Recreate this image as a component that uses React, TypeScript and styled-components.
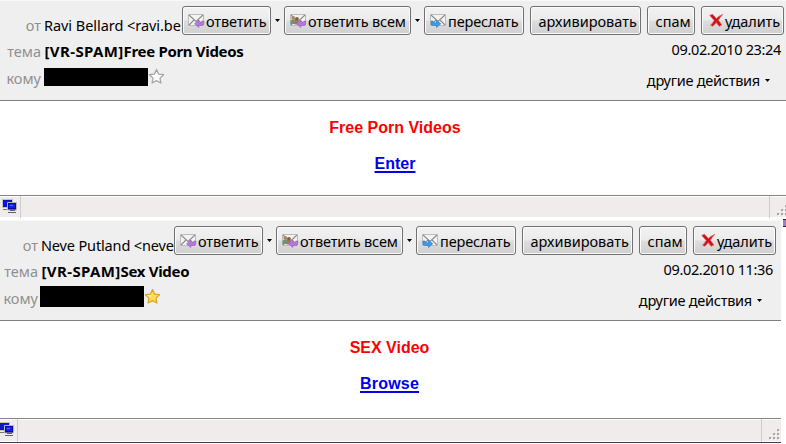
import React from 'react';
import styled, { createGlobalStyle } from 'styled-components';

const GlobalStyle = createGlobalStyle`
  body { margin: 0; background: #fff; }
`;

const Page = styled.main`
  position: relative;
  width: 786px;
  height: 444px;
  overflow: hidden;
  background: #fff;
  color: #000;
  font: 14.5px/20px "Noto Sans", "Open Sans", sans-serif;
`;

const Message = styled.article<{ $width: number }>`
  width: ${p => p.$width}px;
  height: 220px;
  overflow: hidden;
`;

const Header = styled.header`
  box-sizing: border-box;
  height: 101px;
  padding-top: 5px;
  background: #efefef;
  border-top: 1px solid #f8f8f8;
  border-bottom: 1px solid #808080;
`;

const HeaderRow = styled.div<{ $height: number; $edge: number }>`
  display: flex;
  align-items: flex-start;
  height: ${p => p.$height}px;
  padding-right: ${p => p.$edge}px;
  white-space: nowrap;
`;

const Label = styled.span<{ $width: number; $top: number }>`
  flex: none;
  width: ${p => p.$width}px;
  margin-top: ${p => p.$top}px;
  text-align: right;
  color: #8f8f8f;
`;

const Sender = styled.span<{ $spacing: number }>`
  flex: 1;
  min-width: 0;
  margin: 9px 0 0 3px;
  overflow: hidden;
  letter-spacing: ${p => p.$spacing}px;
`;

const Subject = styled.strong`
  flex: 1;
  margin: 3px 0 0 3.5px;
  font-size: 15px;
  letter-spacing: -0.33px;
`;

const SubjectTag = styled.span`
  letter-spacing: 0.38px;
`;

const Stamp = styled.time`
  margin-top: 1px;
  letter-spacing: -0.34px;
`;

const Recipient = styled.div<{ $tall?: boolean }>`
  flex: none;
  width: 104px;
  height: ${p => (p.$tall ? 21 : 18)}px;
  margin: ${p => (p.$tall ? 3 : 5)}px 0 0 ${p => (p.$tall ? 2 : 3)}px;
  background: #000;
`;

const StarIcon = styled.svg`
  flex: none;
  width: 17px;
  height: 17px;
  margin-top: 5px;
`;

const MoreActions = styled.span`
  display: flex;
  align-items: center;
  margin: 7px 0 0 auto;
  letter-spacing: -0.25px;
`;

const Caret = styled.svg`
  width: 5px;
  height: 3px;
  margin-left: 5px;
`;

const Toolbar = styled.div`
  flex: none;
  display: flex;
`;

const Action = styled.button<{ $width: number; $gap: number; $spacing?: number; $pad: number }>`
  box-sizing: border-box;
  display: flex;
  align-items: center;
  width: ${p => p.$width}px;
  height: 29px;
  margin: 0 0 0 ${p => p.$gap}px;
  padding: 0 0 0 ${p => p.$pad}px;
  border: 1px solid #707070;
  border-radius: 3px;
  background: linear-gradient(#f2f2f2 0, #ebebeb 48%, #dddddd 52%, #cfcfcf 100%);
  box-shadow: inset 0 0 0 1px #fbfbfb;
  color: #000;
  font: inherit;
  letter-spacing: ${p => p.$spacing ?? 0}px;
  white-space: nowrap;
`;

const DropArrow = styled.span`
  display: flex;
  width: 13px;
  padding-top: 13px;
  svg { margin-left: 4px; }
`;

const Glyph = styled.svg<{ $w: number }>`
  flex: none;
  width: ${p => p.$w}px;
  height: 18px;
  margin-right: 1px;
`;

const Body = styled.section<{ $second?: boolean }>`
  box-sizing: border-box;
  display: flex;
  flex-direction: column;
  align-items: center;
  height: 94px;
  padding: ${p => (p.$second ? '18px 2px 0 0' : '18px 0 0 4px')};
  font: bold 16px/18px "Liberation Sans", Arial, sans-serif;
`;

const Headline = styled.p`
  margin: 0 0 18px;
  color: #f00;
`;

const Link = styled.a<{ $spacing?: number }>`
  color: #00e;
  letter-spacing: ${p => p.$spacing ?? 0}px;
  text-decoration: underline;
  text-decoration-thickness: 2px;
  text-underline-offset: 2px;
  text-decoration-skip-ink: none;
`;

const StatusBar = styled.footer<{ $second?: boolean }>`
  box-sizing: border-box;
  display: flex;
  height: ${p => (p.$second ? 25 : 23)}px;
  margin-top: ${p => (p.$second ? 3 : 0)}px;
  background: #f0eceb;
  border-top: 1px solid #858585;
  border-bottom: ${p => (p.$second ? '1px solid #45365c' : '0')};
  box-shadow: inset 0 1px #fff, inset 0 -1px #fff;
`;

const StatusIcon = styled.div<{ $width: number; $shift: number }>`
  flex: none;
  width: ${p => p.$width}px;
  border-right: 1px solid #d0cccb;
  svg { display: block; margin: 2px 0 0 ${p => p.$shift}px; }
`;

const StatusText = styled.div`
  flex: 1;
  border-right: 1px solid #d0cccb;
`;

const Grip = styled.div<{ $width: number }>`
  display: flex;
  align-items: flex-end;
  width: ${p => p.$width}px;
  padding-bottom: 1px;
  overflow: hidden;
  svg { flex: none; margin-left: 7px; }
`;

const WindowSliver = styled.i`
  position: absolute;
  left: 783px;
  top: 219px;
  width: 3px;
  height: 6px;
  background: #9c80b8;
  border-top: 1px solid #2d2435;
  border-bottom: 1px solid #2d2435;
`;

function Arrow() {
  return <Caret viewBox="0 0 5 3"><path d="M0 0h5L2.5 3z" /></Caret>;
}

function Mail({ kind }: { kind: 'reply' | 'all' | 'forward' }) {
  return (
    <Glyph $w={17} viewBox="0 0 17 18">
      <path d="M.5 2.500h15v11H.5z" fill="#f3f3f3" stroke="#bcbcbc" />
      <path d="M1 3l7 6.500L15 3M1 13l5-5M15 13l-5-5" fill="none" stroke="#8b8b8b" strokeWidth="1.1" />
      {kind === 'all' && (
        <g>
          <circle cx="3.3" cy="6" r="2" fill="#ad8961" />
          <path d="M.5 12V9.500q0-2 3-2t3 2.500v2z" fill="#719274" />
          <circle cx="7" cy="7" r="1.900" fill="#805f48" />
          <path d="M4.500 12.500q0-4 2.500-4t3 4z" fill="#b36e68" />
        </g>
      )}
      {kind === 'forward' ? (
        <path d="M1 9v2.500q0 2 2.500 2h3v2l4.300-3.700-4.300-3.500v2.500H4Q3 10.800 3 9z" fill="#3b9bea" stroke="#2578c6" strokeWidth=".6" />
      ) : (
        <path d="M15.800 9v2.500q0 2-2.500 2h-2.500v2L6.500 11.800l4.300-3.500v2.500h2q1 0 1-1.800z" fill="#b677df" stroke="#965bc5" strokeWidth=".6" />
      )}
    </Glyph>
  );
}

function Cross() {
  return (
    <Glyph $w={15} viewBox="0 0 15 18">
      <path d="M.8 3.400L3.300 2.300Q6 4.500 7.300 6.600 10 3.600 13.800 2.400 10.800 5.300 9.300 8.300 11.400 10.700 12.800 13L10.300 14.300Q8.800 12.500 7.200 10.500 5.500 12.800 3.800 14.200L1.600 13.200Q4 10.800 5.200 8.400 3 6 .8 3.400z" fill="#ce1217" stroke="#e25c5c" strokeWidth=".8" />
    </Glyph>
  );
}

function Star({ on }: { on?: boolean }) {
  return (
    <StarIcon viewBox="0 0 17 17">
      <path
        d="M8.500 1.500l2.100 4.600 5 .6-3.600 3.400.9 4.900-4.400-2.400L4.100 15l.9-4.900-3.600-3.400 5-.6z"
        fill={on ? '#ffdc58' : '#fcfcfc'}
        stroke={on ? '#dba72b' : '#a5a5a5'}
        strokeWidth="1.300"
        strokeLinejoin="round"
      />
      {on && <path d="M8.500 3.500L7 7.200 3.200 7.500 6 9.800z" fill="#fff1a5" />}
    </StarIcon>
  );
}

function Computers() {
  return (
    <svg width="16" height="16" viewBox="0 0 16 16">
      <path d="M.5 1.500h10v8H.5z" fill="#1010c8" stroke="#c5c3ba" />
      <path d="M2 3h7v5H2z" fill="#0718e6" />
      <path d="M3 10h5v1H1v1h6v-2z" fill="#77756f" />
      <path d="M5.500 4.500h9v7.500h-9z" fill="#0808b0" stroke="#bab8b0" />
      <path d="M7 6h6v4H7z" fill="#1022e8" />
      <path d="M8 7h3v1H8z" fill="#5268ff" />
      <path d="M8 12h5v1H8zM6 14h8v1H6z" fill="#64625e" />
    </svg>
  );
}

function GripDots() {
  const dots = [[8, 0], [4, 4], [8, 4], [0, 8], [4, 8], [8, 8]];
  return (
    <svg width="12" height="12" viewBox="0 0 12 12">
      {dots.map(([x, y]) => (
        <g key={`${x}-${y}`}>
          <rect x={x + 1} y={y + 1} width="2" height="2" fill="#fff" />
          <rect x={x} y={y} width="2.200" height="2.200" fill="#aaa6a4" />
        </g>
      ))}
    </svg>
  );
}

interface MailProps {
  second?: boolean;
  sender: string;
  subject: string;
  date: string;
  headline: string;
  link: string;
}

function MailView({ second, sender, subject, date, headline, link }: MailProps) {
  const label = second ? 38 : 41;
  const edge = second ? 5 : 2;
  return (
    <Message $width={second ? 781 : 786}>
      <Header>
        <HeaderRow $height={32} $edge={edge}>
          <Label $width={label} $top={9}>от</Label>
          <Sender $spacing={second ? -0.15 : -0.05}>{sender}</Sender>
          <Toolbar>
            <Action $width={89} $gap={0} $pad={5} $spacing={-0.15}><Mail kind="reply" />ответить</Action>
            <DropArrow><Arrow /></DropArrow>
            <Action $width={127} $gap={0} $pad={5} $spacing={-0.15}><Mail kind="all" />ответить всем</Action>
            <DropArrow><Arrow /></DropArrow>
            <Action $width={100} $gap={0} $pad={5} $spacing={-0.15}><Mail kind="forward" />переслать</Action>
            <Action $width={111} $gap={6} $pad={7.5}>архивировать</Action>
            <Action $width={48} $gap={6} $pad={7.5}>спам</Action>
            <Action $width={83} $gap={6} $pad={7} $spacing={-0.1}><Cross />удалить</Action>
          </Toolbar>
        </HeaderRow>
        <HeaderRow $height={25} $edge={second ? 8 : 5}>
          <Label $width={label} $top={3}>тема</Label>
          <Subject><SubjectTag>[VR-SPAM]</SubjectTag>{subject}</Subject>
          <Stamp>{date}</Stamp>
        </HeaderRow>
        <HeaderRow $height={37} $edge={second ? 19 : 16}>
          <Label $width={label} $top={5}>кому</Label>
          <Recipient $tall={second} />
          <Star on={second} />
          <MoreActions>другие действия<Arrow /></MoreActions>
        </HeaderRow>
      </Header>
      <Body $second={second}>
        <Headline>{headline}</Headline>
        <Link $spacing={second ? 0.2 : 0}>{link}</Link>
      </Body>
      <StatusBar $second={second}>
        <StatusIcon $width={second ? 17 : 20} $shift={second ? -1 : 2}><Computers /></StatusIcon>
        <StatusText />
        <Grip $width={second ? 19 : 16}><GripDots /></Grip>
      </StatusBar>
    </Message>
  );
}

const MailStack = styled.div`
  display: grid;
  grid-template-rows: 220px 224px;
  ${Message}:last-child { height: 224px; }
`;

export default function App() {
  return (
    <>
      <GlobalStyle />
      <Page>
        <MailStack>
          <MailView sender="Ravi Bellard <ravi.be" subject="Free Porn Videos" date="09.02.2010 23:24" headline="Free Porn Videos" link="Enter" />
          <MailView second sender="Neve Putland <neve" subject="Sex Video" date="09.02.2010 11:36" headline="SEX Video" link="Browse" />
        </MailStack>
        <WindowSliver />
      </Page>
    </>
  );
}
